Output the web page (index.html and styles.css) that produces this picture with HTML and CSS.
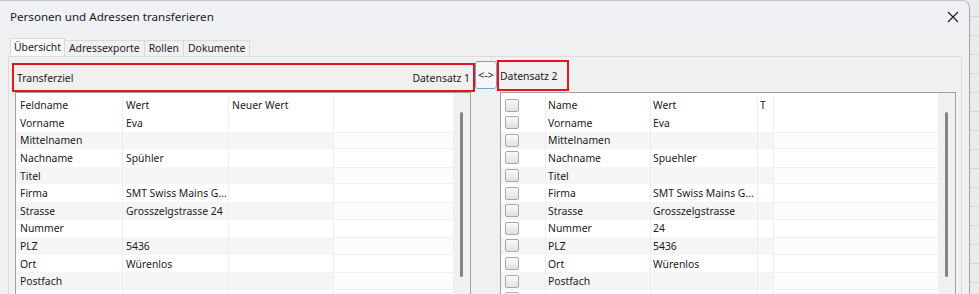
FILE: index.html
```html
<!DOCTYPE html>
<html lang="de">
<head>
<meta charset="utf-8">
<title>Personen und Adressen transferieren</title>
<link rel="stylesheet" href="styles.css">
</head>
<body>
<div class="window">
  <div class="titlebar">
    <span class="title">Personen und Adressen transferieren</span>
    <svg class="close" width="12" height="12" viewBox="0 0 12 12"><path d="M1 1 L11 11 M11 1 L1 11" stroke="#1a1a1a" stroke-width="1.1" fill="none"/></svg>
  </div>
  <div class="content">
    <div class="tabs">
      <div class="tab active">Übersicht</div>
      <div class="tab">Adressexporte</div>
      <div class="tab">Rollen</div>
      <div class="tab">Dokumente</div>
    </div>
    <div class="panel">
      <div class="heads">
        <div class="box1"><span>Transferziel</span><span>Datensatz 1</span></div>
        <div class="swap">&lt;-&gt;</div>
        <div class="box2">Datensatz 2</div>
      </div>
      <div class="grids">
        <div class="grid">
          <div class="rows">
            <div class="row head"><div class="c l1">Feldname</div><div class="c l2">Wert</div><div class="c l3">Neuer Wert</div><div class="fill"></div></div>
            <div class="row"><div class="c l1">Vorname</div><div class="c l2">Eva</div><div class="c l3"></div><div class="fill"></div></div>
            <div class="row alt"><div class="c l1">Mittelnamen</div><div class="c l2"></div><div class="c l3"></div><div class="fill"></div></div>
            <div class="row"><div class="c l1">Nachname</div><div class="c l2">Spühler</div><div class="c l3"></div><div class="fill"></div></div>
            <div class="row alt"><div class="c l1">Titel</div><div class="c l2"></div><div class="c l3"></div><div class="fill"></div></div>
            <div class="row"><div class="c l1">Firma</div><div class="c l2">SMT Swiss Mains G...</div><div class="c l3"></div><div class="fill"></div></div>
            <div class="row alt"><div class="c l1">Strasse</div><div class="c l2">Grosszelgstrasse 24</div><div class="c l3"></div><div class="fill"></div></div>
            <div class="row"><div class="c l1">Nummer</div><div class="c l2"></div><div class="c l3"></div><div class="fill"></div></div>
            <div class="row alt"><div class="c l1">PLZ</div><div class="c l2">5436</div><div class="c l3"></div><div class="fill"></div></div>
            <div class="row"><div class="c l1">Ort</div><div class="c l2">Würenlos</div><div class="c l3"></div><div class="fill"></div></div>
            <div class="row alt"><div class="c l1">Postfach</div><div class="c l2"></div><div class="c l3"></div><div class="fill"></div></div>
            <div class="row"><div class="c l1"></div><div class="c l2"></div><div class="c l3"></div><div class="fill"></div></div>
          </div>
          <div class="scroll"><div class="thumb"></div></div>
        </div>
        <div class="grid">
          <div class="rows">
            <div class="row head"><div class="c r0"><span class="cb"></span></div><div class="c r1">Name</div><div class="c r2">Wert</div><div class="c r3">T</div><div class="fill"></div></div>
            <div class="row"><div class="c r0"><span class="cb"></span></div><div class="c r1">Vorname</div><div class="c r2">Eva</div><div class="c r3"></div><div class="fill"></div></div>
            <div class="row alt"><div class="c r0"><span class="cb"></span></div><div class="c r1">Mittelnamen</div><div class="c r2"></div><div class="c r3"></div><div class="fill"></div></div>
            <div class="row"><div class="c r0"><span class="cb"></span></div><div class="c r1">Nachname</div><div class="c r2">Spuehler</div><div class="c r3"></div><div class="fill"></div></div>
            <div class="row alt"><div class="c r0"><span class="cb"></span></div><div class="c r1">Titel</div><div class="c r2"></div><div class="c r3"></div><div class="fill"></div></div>
            <div class="row"><div class="c r0"><span class="cb"></span></div><div class="c r1">Firma</div><div class="c r2">SMT Swiss Mains G...</div><div class="c r3"></div><div class="fill"></div></div>
            <div class="row alt"><div class="c r0"><span class="cb"></span></div><div class="c r1">Strasse</div><div class="c r2">Grosszelgstrasse</div><div class="c r3"></div><div class="fill"></div></div>
            <div class="row"><div class="c r0"><span class="cb"></span></div><div class="c r1">Nummer</div><div class="c r2">24</div><div class="c r3"></div><div class="fill"></div></div>
            <div class="row alt"><div class="c r0"><span class="cb"></span></div><div class="c r1">PLZ</div><div class="c r2">5436</div><div class="c r3"></div><div class="fill"></div></div>
            <div class="row"><div class="c r0"><span class="cb"></span></div><div class="c r1">Ort</div><div class="c r2">Würenlos</div><div class="c r3"></div><div class="fill"></div></div>
            <div class="row alt"><div class="c r0"><span class="cb"></span></div><div class="c r1">Postfach</div><div class="c r2"></div><div class="c r3"></div><div class="fill"></div></div>
            <div class="row"><div class="c r0"><span class="cb"></span></div><div class="c r1"></div><div class="c r2"></div><div class="c r3"></div><div class="fill"></div></div>
          </div>
          <div class="scroll"><div class="thumb"></div></div>
        </div>
      </div>
    </div>
  </div>
</div>
</body>
</html>
```
FILE: styles.css
```css
* { box-sizing: border-box; }
html, body { margin: 0; padding: 0; }
body {
  width: 979px;
  height: 294px;
  overflow: hidden;
  background: repeating-linear-gradient(to bottom, #ebebeb 0 16px, #d9d9d9 16px 17px, #ebebeb 17px 19px);
  font-family: "Noto Sans", "Open Sans", sans-serif;
  font-size: 10.4px;
  color: #1b1b1b;
}
.window {
  width: 970px;
  height: 294px;
  background: #f0f0f0;
  border-top: 1px solid #c2c2c2;
  border-right: 1px solid #a3a3a3;
  border-top-right-radius: 8px;
  overflow: hidden;
}
.titlebar {
  height: 30px;
  background: #eff1f6;
  display: flex;
  align-items: center;
  justify-content: space-between;
  padding: 0 10px 0 10px;
}
.title { font-size: 11.6px; color: #1a1a1a; }
.close { display: block; margin-top: 1px; }
.content { padding: 7px 7px 0 8px; }
.tabs {
  display: flex;
  align-items: flex-end;
  height: 18px;
  padding-left: 2px;
}
.tab {
  height: 16px;
  line-height: 14px;
  padding: 0 4px;
  border: 1px solid #dadada;
  border-bottom: none;
  margin-left: -1px;
  background: #f0f0f0;
  white-space: nowrap;
}
.tab:first-child { margin-left: 0; }
.tab.active {
  height: 18px;
  line-height: 17px;
  background: #fafafa;
  padding: 0 3px;
  position: relative;
  z-index: 1;
}
.panel {
  border: 1px solid #dcdcdc;
  border-bottom: none;
  background: #f0f0f0;
  height: 238px;
  overflow: hidden;
}
.heads {
  display: flex;
  height: 35px;
  padding-left: 3px;
}
.box1 {
  width: 463px;
  height: 29px;
  margin-top: 6px;
  border: 2px solid #e8141b;
  display: flex;
  align-items: center;
  justify-content: space-between;
  padding: 0 3px;
}
.swap {
  width: 22px;
  height: 28px;
  margin-top: 4px;
  border: 1px solid #6aa7dd;
  border-radius: 3px;
  background: #f7f7f7;
  display: flex;
  align-items: center;
  justify-content: center;
  padding-bottom: 2px;
  font-size: 10.8px;
}
.box2 {
  width: 72px;
  height: 31px;
  margin-top: 3px;
  border: 2px solid #e8141b;
  display: flex;
  align-items: center;
  padding-left: 1px;
  white-space: nowrap;
}
.grids {
  display: flex;
  gap: 29px;
  padding-left: 6px;
}
.grid {
  width: 456px;
  height: 210px;
  border: 1px solid #a0a0a0;
  border-bottom: none;
  background: #fff;
  display: flex;
  overflow: hidden;
}
.rows { flex: 1; min-width: 0; }
.row {
  display: flex;
  height: 17.6px;
  background: #fff;
}
.row.head { height: 21px; padding-top: 3px; }
.row.alt .c { background: #f5f5f5; }
.row.alt .fill { background: #fcfcfc; box-shadow: inset 0 1px 0 #efefef, inset 0 -1px 0 #efefef; }
.c {
  display: flex;
  align-items: center;
  padding-left: 3px;
  border-right: 1px solid #ededed;
  white-space: nowrap;
  overflow: hidden;
  flex: none;
}
.row.head .c { background: #fff; }
.fill { flex: 1; }
.l1 { width: 107px; padding-left: 4px; }
.l2 { width: 106px; }
.l3 { width: 105px; }
.r0 { width: 45px; padding-left: 4px; }
.r1 { width: 105px; padding-left: 2px; }
.r2 { width: 107px; padding-left: 2px; }
.r3 { width: 16px; padding-left: 2px; }
.cb {
  display: block;
  width: 14px;
  height: 13px;
  border: 1px solid #a8a8a8;
  border-radius: 2px;
  background: linear-gradient(to bottom, #fbfbfb, #e0e0e0);
}
.scroll {
  width: 17px;
  flex: none;
  background: #f0f0f0;
  padding: 19px 0 0 7px;
}
.thumb {
  width: 3px;
  height: 165px;
  border-radius: 2px;
  background: #858585;
}
```
